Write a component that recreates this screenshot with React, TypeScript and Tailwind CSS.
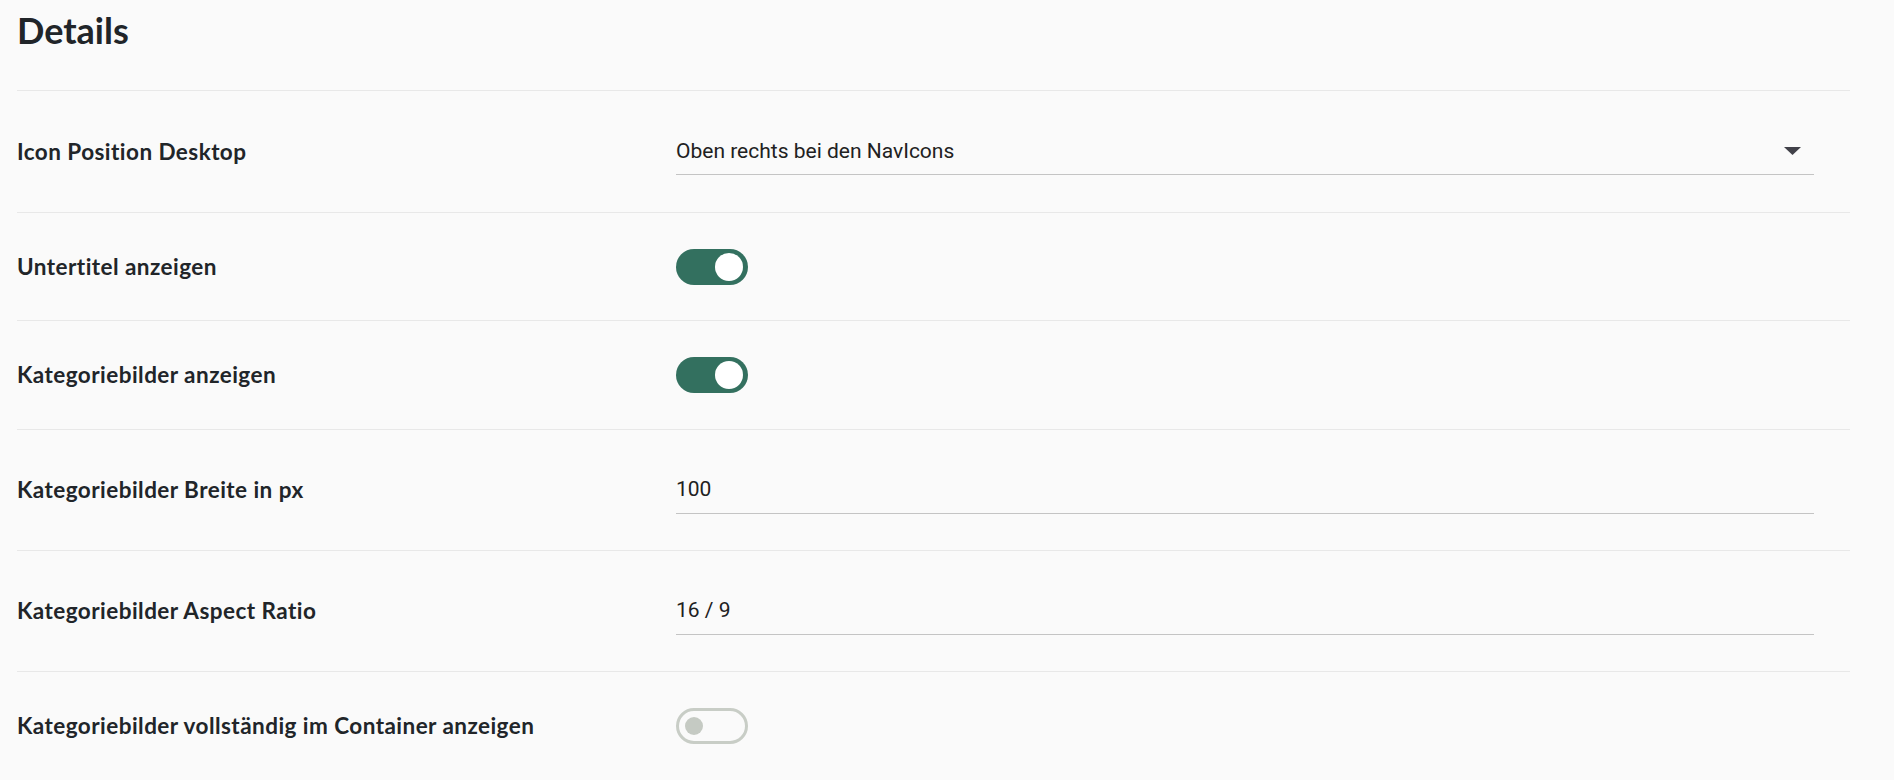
import React from "react";

const labelCls =
  "w-[659px] shrink-0 font-['Lato',sans-serif] font-bold text-[22.5px] tracking-[0.45px] text-[#212529]";

function Row({ h, label, children }: { h: string; label: string; children: React.ReactNode }) {
  return (
    <div className={`flex items-center border-b border-[#e8e8e8] ${h}`}>
      <div className={labelCls}>{label}</div>
      {children}
    </div>
  );
}

function TextBox({ value, select }: { value: string; select?: boolean }) {
  return (
    <div className="relative w-[1138px] border-b border-[#c4c4c4] pt-[8px] pb-[7px]">
      <div className="font-['Roboto',sans-serif] text-[21px] leading-[31.5px] text-[#212121]">{value}</div>
      {select && (
        <svg
          className="absolute right-[13px] top-1/2 -translate-y-1/2"
          width="17"
          height="8"
          viewBox="0 0 17 8"
        >
          <polygon points="0,0 17,0 8.5,8" fill="#414149" />
        </svg>
      )}
    </div>
  );
}

function Toggle({ on }: { on: boolean }) {
  if (on) {
    return (
      <div className="flex h-[36px] w-[72px] items-center justify-end rounded-full bg-[#33705f] pr-[5px]">
        <div className="h-[28px] w-[28px] rounded-full bg-white" />
      </div>
    );
  }
  return (
    <div className="flex h-[36px] w-[72px] items-center rounded-full border-[3px] border-[#c8cdc6] pl-[6px]">
      <div className="h-[18px] w-[18px] rounded-full bg-[#c5cac3]" />
    </div>
  );
}

export default function App() {
  return (
    <div className="min-h-screen w-full bg-[#fafafa] pl-[17px] pr-[44px]">
      <div className="h-[91px] border-b border-[#e8e8e8] pt-[12px]">
        <h1 className="font-['Lato',sans-serif] text-[36px] font-bold leading-[37px] text-[#212529]">
          Details
        </h1>
      </div>
      <Row h="h-[122px]" label="Icon Position Desktop">
        <TextBox value="Oben rechts bei den NavIcons" select />
      </Row>
      <Row h="h-[108px]" label="Untertitel anzeigen">
        <Toggle on />
      </Row>
      <Row h="h-[109px]" label="Kategoriebilder anzeigen">
        <Toggle on />
      </Row>
      <Row h="h-[121px]" label="Kategoriebilder Breite in px">
        <TextBox value="100" />
      </Row>
      <Row h="h-[121px]" label="Kategoriebilder Aspect Ratio">
        <TextBox value="16 / 9" />
      </Row>
      <div className="flex h-[108px] items-center">
        <div className={labelCls}>Kategoriebilder vollständig im Container anzeigen</div>
        <Toggle on={false} />
      </div>
    </div>
  );
}
